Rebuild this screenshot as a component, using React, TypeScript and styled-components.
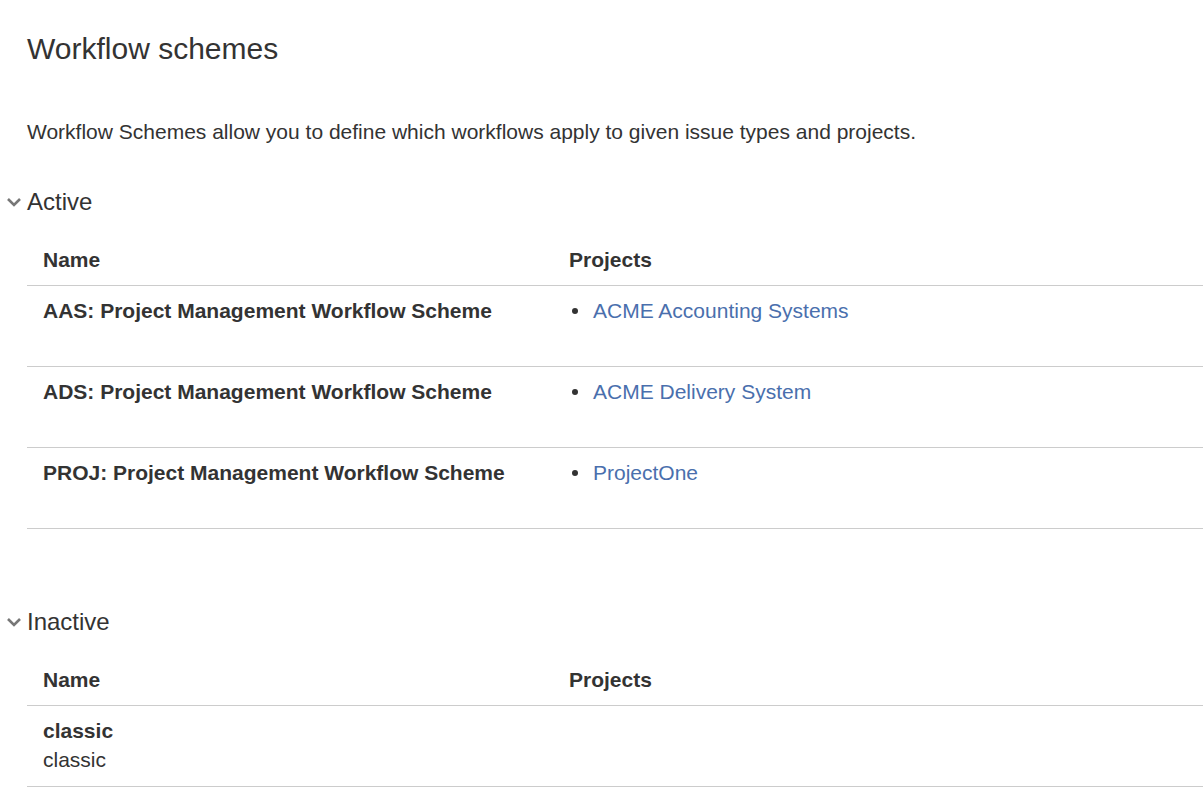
import React from 'react';
import styled, { createGlobalStyle } from 'styled-components';

const GlobalStyle = createGlobalStyle`
  html, body {
    margin: 0;
    padding: 0;
    background: #fff;
  }
  body {
    font-family: "Liberation Sans", Arial, sans-serif;
    color: #333;
  }
`;

const Page = styled.div`
  padding: 31px 0 0 27px;
  overflow: hidden;
`;

const Title = styled.h1`
  margin: 0;
  font-size: 30px;
  line-height: 36px;
  font-weight: normal;
  color: #333;
`;

const Description = styled.p`
  margin: 50px 0 0;
  font-size: 21px;
  line-height: 29px;
`;

const Section = styled.section<{ $gap: number }>`
  margin-top: ${(p) => p.$gap}px;
`;

const SectionHeading = styled.h3`
  display: flex;
  align-items: center;
  margin: 0 0 0 -21px;
  font-size: 24px;
  line-height: 30px;
  font-weight: normal;
  color: #333;
`;

const Chevron = styled.span`
  display: inline-flex;
  width: 21px;
  justify-content: flex-start;
  color: #777;
`;

const Table = styled.table`
  width: 100%;
  margin-top: 17px;
  border-collapse: collapse;
  table-layout: fixed;
  font-size: 21px;
  line-height: 29px;
`;

const HeadCell = styled.th<{ $width?: number }>`
  width: ${(p) => (p.$width ? `${p.$width}px` : 'auto')};
  padding: 11px 16px 11px;
  text-align: left;
  font-weight: bold;
  border-bottom: 1px solid #ccc;
`;

const Cell = styled.td`
  padding: 10px 16px 12px;
  vertical-align: top;
  border-bottom: 1px solid #ccc;
`;

const SchemeName = styled.strong`
  display: block;
  font-weight: bold;
  white-space: nowrap;
`;

const SchemeDesc = styled.div`
  color: #333;
`;

const ProjectList = styled.ul`
  list-style: none;
  margin: 0 0 29px;
  padding: 0 0 0 3px;
`;

const ProjectItem = styled.li`
  display: flex;
  align-items: center;
  gap: 15px;
`;

const Bullet = styled.span`
  width: 6px;
  height: 6px;
  border-radius: 50%;
  background: #333;
  flex-shrink: 0;
`;

const ProjectLink = styled.a`
  color: #4a6fad;
  text-decoration: none;
`;

const ChevronIcon = () => (
  <svg width="16" height="10" viewBox="0 0 16 10">
    <path d="M2 2 L8 8 L14 2" fill="none" stroke="currentColor" strokeWidth="2.6" />
  </svg>
);

interface Scheme {
  name: string;
  description?: string;
  projects: string[];
}

const activeSchemes: Scheme[] = [
  { name: 'AAS: Project Management Workflow Scheme', projects: ['ACME Accounting Systems'] },
  { name: 'ADS: Project Management Workflow Scheme', projects: ['ACME Delivery System'] },
  { name: 'PROJ: Project Management Workflow Scheme', projects: ['ProjectOne'] },
];

const inactiveSchemes: Scheme[] = [{ name: 'classic', description: 'classic', projects: [] }];

const SchemeTable: React.FC<{ schemes: Scheme[] }> = ({ schemes }) => (
  <Table>
    <thead>
      <tr>
        <HeadCell $width={494}>Name</HeadCell>
        <HeadCell>Projects</HeadCell>
      </tr>
    </thead>
    <tbody>
      {schemes.map((s) => (
        <tr key={s.name}>
          <Cell>
            <SchemeName>{s.name}</SchemeName>
            {s.description && <SchemeDesc>{s.description}</SchemeDesc>}
          </Cell>
          <Cell>
            {s.projects.length > 0 && (
              <ProjectList>
                {s.projects.map((p) => (
                  <ProjectItem key={p}>
                    <Bullet />
                    <ProjectLink href="#">{p}</ProjectLink>
                  </ProjectItem>
                ))}
              </ProjectList>
            )}
          </Cell>
        </tr>
      ))}
    </tbody>
  </Table>
);

const App: React.FC = () => (
  <>
    <GlobalStyle />
    <Page>
      <Title>Workflow schemes</Title>
      <Description>
        Workflow Schemes allow you to define which workflows apply to given issue types and projects.
      </Description>

      <Section $gap={41}>
        <SectionHeading>
          <Chevron>
            <ChevronIcon />
          </Chevron>
          Active
        </SectionHeading>
        <SchemeTable schemes={activeSchemes} />
      </Section>

      <Section $gap={78}>
        <SectionHeading>
          <Chevron>
            <ChevronIcon />
          </Chevron>
          Inactive
        </SectionHeading>
        <SchemeTable schemes={inactiveSchemes} />
      </Section>
    </Page>
  </>
);

export default App;
